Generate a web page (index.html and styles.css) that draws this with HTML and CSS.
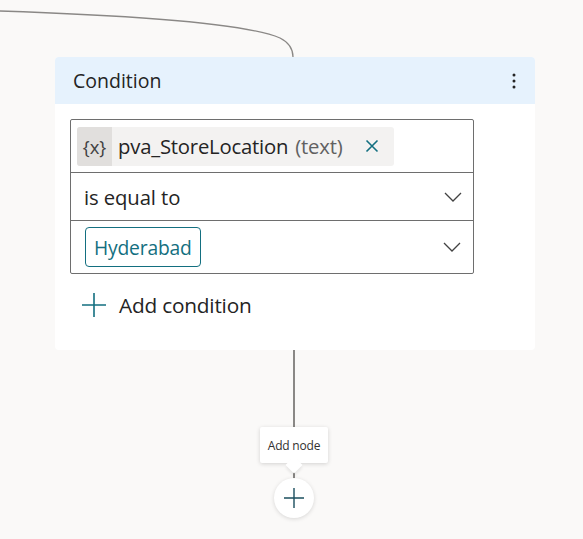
FILE: index.html
```html
<!DOCTYPE html>
<html lang="en">
<head>
<meta charset="utf-8">
<title>Condition</title>
<link rel="stylesheet" href="styles.css">
</head>
<body>
<div class="canvas">
  <svg class="connector" width="583" height="60" viewBox="0 0 583 60" aria-hidden="true">
    <path d="M0 11 C 150 16, 250 25, 280 38 C 290 43, 293 49, 293 57" fill="none" stroke="#8a8886" stroke-width="1.3"/>
  </svg>
  <div class="card">
    <div class="card-header">
      <span class="card-title">Condition</span>
      <span class="kebab" aria-label="More options">
        <svg width="4" height="18" viewBox="0 0 4 18"><circle cx="2" cy="3" r="1.5" fill="#242424"/><circle cx="2" cy="9" r="1.5" fill="#242424"/><circle cx="2" cy="15" r="1.5" fill="#242424"/></svg>
      </span>
    </div>
    <div class="card-body">
      <div class="cond-box">
        <div class="row row-var">
          <div class="chip">
            <span class="chip-icon">{x}</span>
            <span class="chip-name">pva_StoreLocation</span>
            <span class="chip-type">(text)</span>
            <span class="chip-close">
              <svg width="14" height="14" viewBox="0 0 14 14"><path d="M1.5 1.5 L12.5 12.5 M12.5 1.5 L1.5 12.5" stroke="#136f80" stroke-width="1.6" fill="none"/></svg>
            </span>
          </div>
        </div>
        <div class="row row-op">
          <span class="op-text">is equal to</span>
          <svg class="chev" width="18" height="10" viewBox="0 0 18 10"><path d="M1 1 L9 9 L17 1" stroke="#424242" stroke-width="1.3" fill="none"/></svg>
        </div>
        <div class="row row-val">
          <span class="value-tag">Hyderabad</span>
          <svg class="chev" width="18" height="10" viewBox="0 0 18 10"><path d="M1 1 L9 9 L17 1" stroke="#424242" stroke-width="1.3" fill="none"/></svg>
        </div>
      </div>
      <div class="add-cond">
        <svg width="24" height="24" viewBox="0 0 24 24"><path d="M12 0 V24 M0 12 H24" stroke="#136f80" stroke-width="1.6" fill="none"/></svg>
        <span>Add condition</span>
      </div>
    </div>
  </div>
  <div class="stem">
    <div class="stem-line"></div>
    <div class="tooltip">Add node</div>
    <div class="stem-gap"></div>
    <div class="add-node">
      <svg width="20" height="20" viewBox="0 0 20 20"><path d="M10 0 V20 M0 10 H20" stroke="#1b4f5e" stroke-width="1.4" fill="none"/></svg>
    </div>
  </div>
</div>
</body>
</html>
```

FILE: styles.css
```css
* { box-sizing: border-box; }
html, body { margin: 0; padding: 0; }
body {
  background: #faf9f8;
  font-family: "Open Sans", "Noto Sans", sans-serif;
  color: #242424;
  width: 583px;
  height: 539px;
  overflow: hidden;
}
.canvas {
  position: relative;
  padding-top: 57px;
  width: 583px;
  height: 539px;
}
.connector {
  position: absolute;
  left: 0;
  top: 0;
}
.card {
  margin-left: 55px;
  width: 480px;
  height: 293px;
  background: #ffffff;
  border-radius: 4px;
}
.card-header {
  height: 47px;
  background: #e6f2fd;
  border-radius: 4px 4px 0 0;
  display: flex;
  align-items: center;
  justify-content: space-between;
  padding: 0 19px 0 18px;
}
.card-title {
  font-size: 19.5px;
}
.kebab { display: flex; align-items: center; }
.card-body {
  padding: 15px 61px 0 15px;
}
.cond-box {
  border: 1.5px solid #6e6e6e;
  border-radius: 2px;
}
.row {
  display: flex;
  align-items: center;
}
.row + .row { border-top: 1px solid #6e6e6e; }
.row-var {
  height: 52px;
  padding: 0 6px;
}
.chip {
  display: flex;
  align-items: center;
  height: 39px;
  width: 317px;
  background: #f3f2f1;
  border-radius: 3px;
  font-size: 20.3px;
}
.chip-icon {
  width: 35px;
  height: 39px;
  background: #e1dfdd;
  border-radius: 3px 0 0 3px;
  display: flex;
  align-items: center;
  justify-content: center;
  font-size: 18.5px;
  color: #424242;
}
.chip-name { margin-left: 6px; letter-spacing: -0.2px; }
.chip-type { margin-left: 7px; color: #616161; letter-spacing: -0.2px; }
.chip-close { margin-left: 22px; display: flex; }
.row-op {
  height: 48px;
  padding: 0 11px 0 13px;
  justify-content: space-between;
}
.op-text { font-size: 20.3px; letter-spacing: -0.1px; }
.row-val {
  height: 53px;
  padding: 0 12px 0 14px;
  justify-content: space-between;
}
.value-tag {
  display: flex;
  align-items: center;
  height: 40px;
  padding: 0 8px;
  border: 1px solid #136f80;
  border-radius: 4px;
  color: #136f80;
  font-size: 19.3px;
  letter-spacing: -0.2px;
}
.add-cond {
  display: flex;
  align-items: center;
  gap: 13px;
  margin-top: 17px;
  padding-left: 12px;
  font-size: 20.8px;
  letter-spacing: -0.2px;
}
.stem {
  display: flex;
  flex-direction: column;
  align-items: center;
  width: 40px;
  margin-left: 274px;
}
.stem-line {
  width: 1.5px;
  height: 77px;
  background: #8a8886;
}
.tooltip {
  position: relative;
  width: 68px;
  height: 36px;
  background: #ffffff;
  box-shadow: 0 1px 4px rgba(0,0,0,0.16);
  border-radius: 2px;
  font-size: 12px;
  color: #323130;
  display: flex;
  align-items: center;
  justify-content: center;
  letter-spacing: -0.2px;
}
.tooltip::after {
  content: "";
  position: absolute;
  left: 50%;
  bottom: -8px;
  width: 12px;
  height: 12px;
  background: #ffffff;
  transform: translateX(-50%) rotate(45deg);
  box-shadow: 2px 2px 3px rgba(0,0,0,0.08);
}
.stem-gap {
  width: 1.5px;
  height: 16px;
  background: #8a8886;
}
.add-node {
  width: 40px;
  height: 40px;
  border-radius: 50%;
  background: #ffffff;
  box-shadow: 0 1px 4px rgba(0,0,0,0.14);
  display: flex;
  align-items: center;
  justify-content: center;
  margin-top: -1px;
}
```
